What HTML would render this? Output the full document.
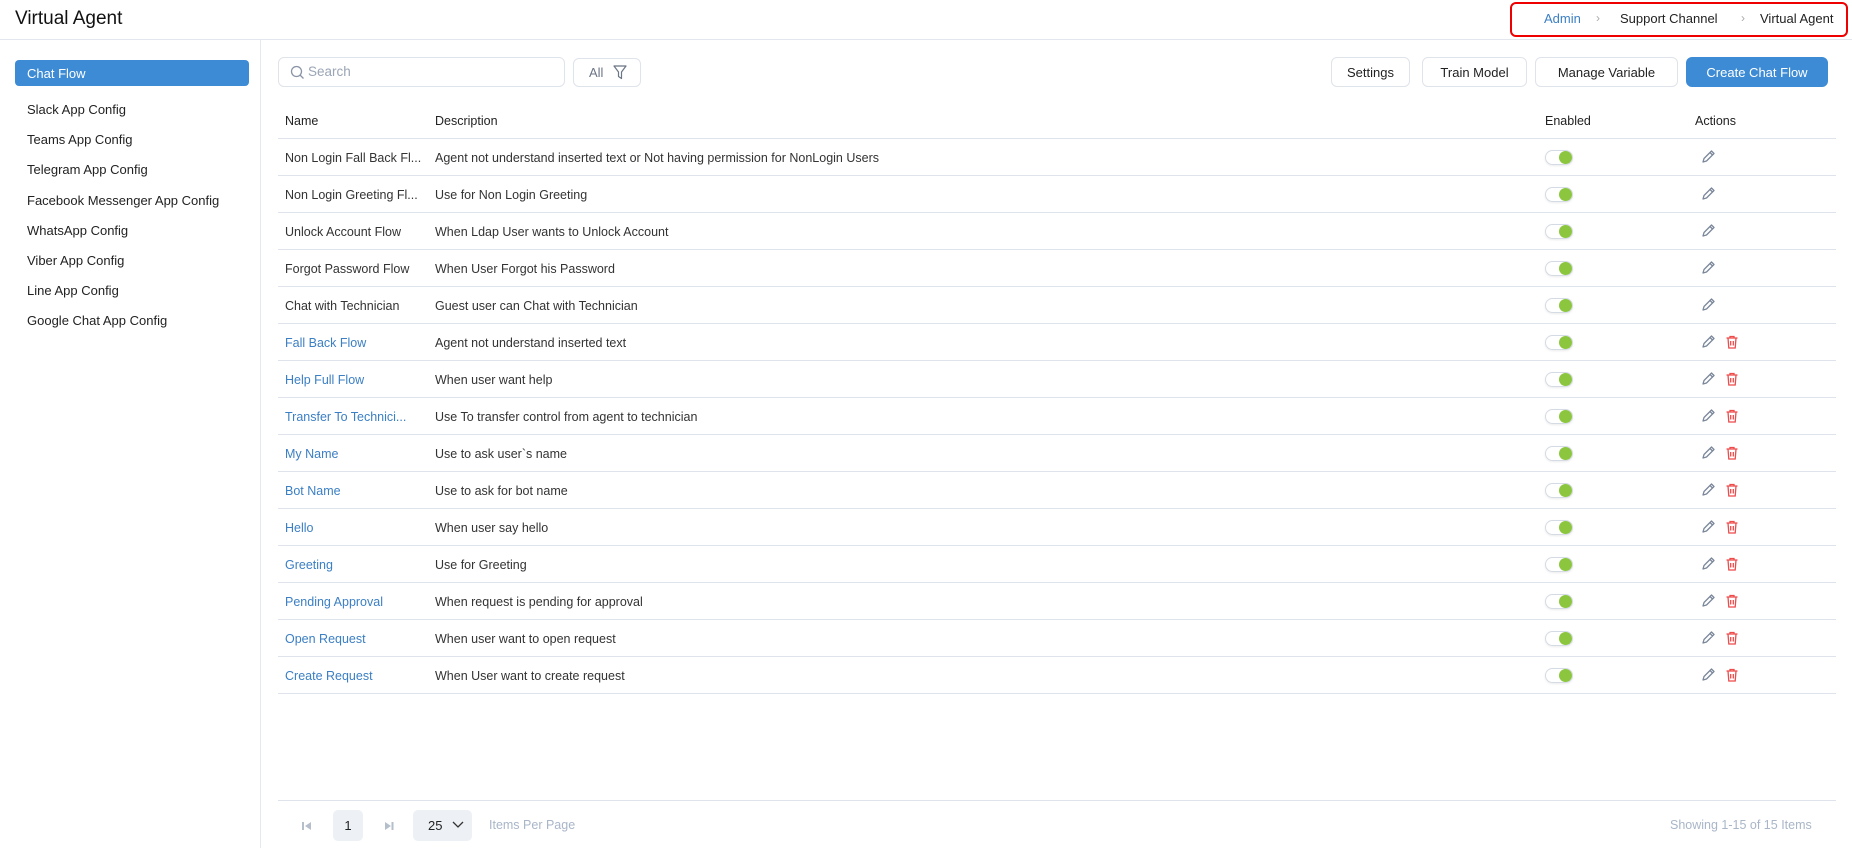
<!DOCTYPE html>
<html><head><meta charset="utf-8"><style>
*{box-sizing:border-box;margin:0;padding:0}
body{width:1852px;height:848px;background:#fff;font-family:"Liberation Sans",sans-serif;color:#222;font-size:13px;position:relative;overflow:hidden}
.a{position:absolute;white-space:nowrap}
.hdr{position:absolute;left:0;top:39px;width:1852px;height:1px;background:#e3e6ec}
.side{position:absolute;left:260px;top:40px;width:1px;height:808px;background:#e6e8ec}
.btn{position:absolute;top:57px;height:30px;border:1px solid #dfe3ea;border-radius:6px;background:#fff;font-size:13px;display:flex;align-items:center;justify-content:center;color:#222}
.row{position:absolute;left:278px;width:1558px;height:37px;border-bottom:1px solid #dfe4ec}
.row span{position:absolute;top:12px;font-size:12.5px;white-space:nowrap}
.tg{position:absolute;left:1267px;top:11px;width:28px;height:15px;border:1px solid #d5dbe4;border-radius:8px;background:#fff;box-shadow:0 1px 2px rgba(0,0,0,.08)}
.tg::after{content:"";position:absolute;right:0;top:0;width:13px;height:13px;border-radius:50%;background:#8cc63f}
.ed{position:absolute;left:1422px;top:10px}
.tr{position:absolute;left:1446px;top:10px}
</style></head><body>
<div class="a" style="left:15px;top:8px;font-size:19px;color:#111">Virtual Agent</div>
<div class="a" style="left:1510px;top:2px;width:338px;height:35px;border:2px solid #e00;border-radius:6px"></div>
<div class="a" style="left:1544px;top:11px;font-size:13px;color:#3b7fc4">Admin</div>
<div class="a" style="left:1596px;top:11px;font-size:12px;color:#aaa">›</div>
<div class="a" style="left:1620px;top:11px;font-size:13px">Support Channel</div>
<div class="a" style="left:1741px;top:11px;font-size:12px;color:#aaa">›</div>
<div class="a" style="left:1760px;top:11px;font-size:13px">Virtual Agent</div>
<div class="hdr"></div>
<div class="side"></div>
<div class="a" style="left:15px;top:60px;width:234px;height:26px;background:#3d8bd4;border-radius:4px;color:#fff;font-size:13px;padding:6px 12px">Chat Flow</div>
<div class="a" style="left:27px;top:95px;font-size:13px;line-height:30.2px">Slack App Config<br>Teams App Config<br>Telegram App Config<br>Facebook Messenger App Config<br>WhatsApp Config<br>Viber App Config<br>Line App Config<br>Google Chat App Config</div>
<div class="a" style="left:278px;top:57px;width:287px;height:30px;border:1px solid #dfe3ea;border-radius:6px"></div>
<svg class="a" style="left:290px;top:65px" width="15" height="15" viewBox="0 0 15 15"><circle cx="6.5" cy="6.5" r="5" fill="none" stroke="#8a94a6" stroke-width="1.3"/><path d="M10 10l3.5 3.5" stroke="#8a94a6" stroke-width="1.3"/></svg>
<div class="a" style="left:308px;top:64px;font-size:13.5px;color:#9aa5b5">Search</div>
<div class="a" style="left:573px;top:58px;width:68px;height:29px;border:1px solid #dfe3ea;border-radius:6px"></div>
<div class="a" style="left:589px;top:65px;font-size:13px;color:#6b7585">All</div>
<svg class="a" style="left:613px;top:65px" width="14" height="15" viewBox="0 0 14 15"><path d="M1 1h12L8.5 7v6.5L5.5 11.5V7z" fill="none" stroke="#6b7585" stroke-width="1.2" stroke-linejoin="round"/></svg>
<div class="btn" style="left:1331px;width:79px">Settings</div>
<div class="btn" style="left:1422px;width:105px">Train Model</div>
<div class="btn" style="left:1535px;width:143px">Manage Variable</div>
<div class="btn" style="left:1686px;width:142px;background:#3d8bd4;border-color:#3d8bd4;color:#fff">Create Chat Flow</div>
<div class="row" style="top:102px"><span style="left:7px">Name</span><span style="left:157px">Description</span><span style="left:1267px">Enabled</span><span style="left:1417px">Actions</span></div>
<div id="rows"></div>
<div class="a" style="left:278px;top:800px;width:1558px;height:1px;background:#dfe4ec"></div>
<svg class="a" style="left:302px;top:821px" width="10" height="10"><rect x="0" y="1" width="2" height="8" fill="#b5bfcc"/><path d="M9 1v8L3 5z" fill="#b5bfcc"/></svg>
<div class="a" style="left:333px;top:810px;width:30px;height:31px;background:#edf0f4;border-radius:5px;text-align:center;line-height:31px;font-size:13px">1</div>
<svg class="a" style="left:384px;top:821px" width="10" height="10"><path d="M1 1v8l6-4z" fill="#b5bfcc"/><rect x="7.5" y="1" width="2" height="8" fill="#b5bfcc"/></svg>
<div class="a" style="left:413px;top:810px;width:59px;height:31px;background:#edf0f4;border-radius:5px"></div>
<div class="a" style="left:428px;top:818px;font-size:13px">25</div>
<svg class="a" style="left:452px;top:821px" width="12" height="8"><path d="M1 1l5 5 5-5" fill="none" stroke="#333" stroke-width="1.3"/></svg>
<div class="a" style="left:489px;top:818px;font-size:12.5px;color:#a9b6c8">Items Per Page</div>
<div class="a" style="left:1670px;top:818px;font-size:12.5px;color:#a9b6c8">Showing 1-15 of 15 Items</div>
<script>
var d=[["Non Login Fall Back Fl...","Agent not understand inserted text or Not having permission for NonLogin Users",0],
["Non Login Greeting Fl...","Use for Non Login Greeting",0],
["Unlock Account Flow","When Ldap User wants to Unlock Account",0],
["Forgot Password Flow","When User Forgot his Password",0],
["Chat with Technician","Guest user can Chat with Technician",0],
["Fall Back Flow","Agent not understand inserted text",1],
["Help Full Flow","When user want help",1],
["Transfer To Technici...","Use To transfer control from agent to technician",1],
["My Name","Use to ask user`s name",1],
["Bot Name","Use to ask for bot name",1],
["Hello","When user say hello",1],
["Greeting","Use for Greeting",1],
["Pending Approval","When request is pending for approval",1],
["Open Request","When user want to open request",1],
["Create Request","When User want to create request",1]];
var h="";
var pen='<svg class="ed" width="16" height="16" viewBox="0 0 16 16"><path d="M3 13l1-3.5 7.5-7.5 2.5 2.5-7.5 7.5z M10 3.5l2.5 2.5" fill="none" stroke="#7a879a" stroke-width="1.3" stroke-linejoin="round"/></svg>';
var tr='<svg class="tr" width="16" height="16" viewBox="0 0 16 16"><path d="M2.5 4h11M6 4V2.5h4V4M4 4l.8 10h6.4L12 4M6.7 7v4.5M9.3 7v4.5" fill="none" stroke="#ee4b4b" stroke-width="1.3"/></svg>';
for(var i=0;i<d.length;i++){var r=d[i];
h+='<div class="row" style="top:'+(139+i*37)+'px"><span style="left:7px;color:'+(r[2]?'#3b7fc4':'#333')+'">'+r[0]+'</span><span style="left:157px;color:#333">'+r[1]+'</span><div class="tg"></div>'+pen+(r[2]?tr:'')+'</div>';}
document.getElementById("rows").innerHTML=h;
</script>
</body></html>
